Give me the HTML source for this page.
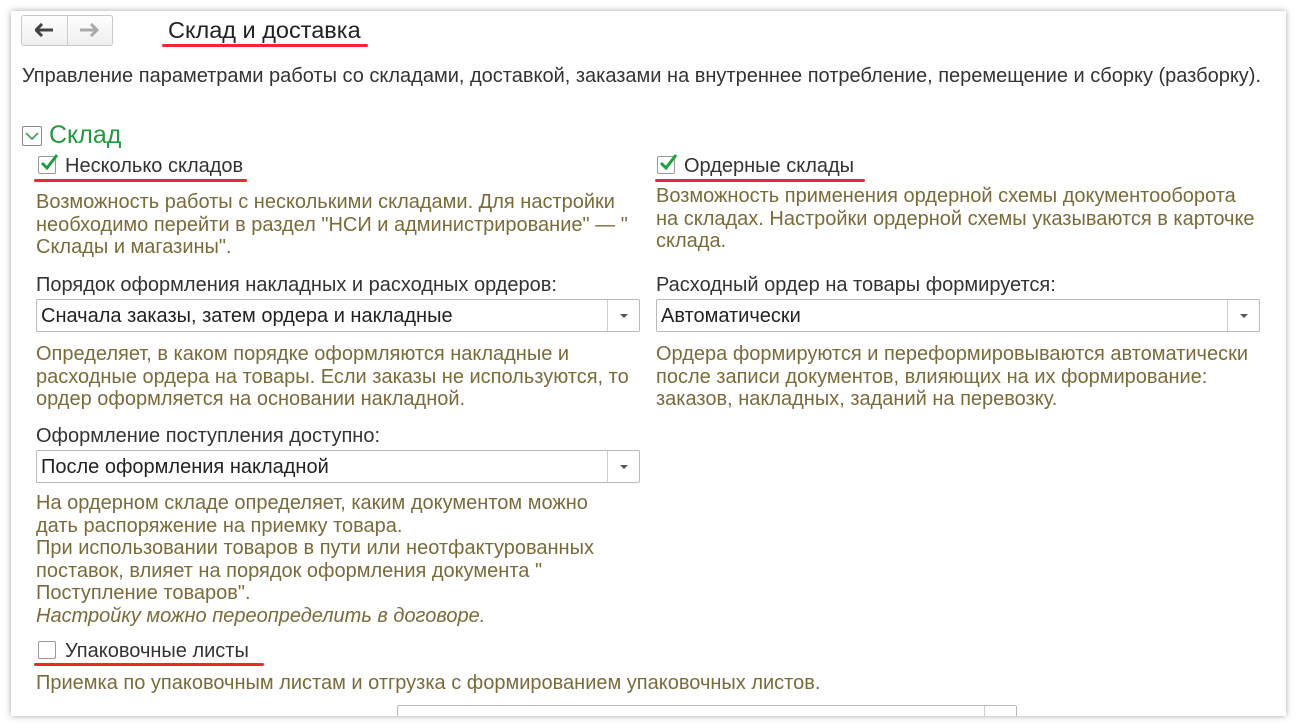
<!DOCTYPE html>
<html><head><meta charset="utf-8"><style>
body{margin:0;width:1297px;height:727px;background:#fff;font-family:"Liberation Sans",Arial,sans-serif;position:relative;overflow:hidden}
.panel{position:absolute;left:11px;top:11px;width:1275px;height:705px;background:#fff;box-shadow:0 0 6px rgba(0,0,0,.35);overflow:hidden}
.a{position:absolute;white-space:nowrap}
.t{font-size:20px;color:#333}
.d{font-size:20px;color:#7a6b3a;line-height:22.6px;white-space:nowrap}
.red{position:absolute;height:3px;background:#f0282d;border-radius:2px}
.cb{position:absolute;width:16px;height:16px;border:1px solid #999;border-radius:2px;background:#fff}
.sel{position:absolute;height:31px;border:1px solid #b9b9b9;border-radius:2px;background:#fff}
.sel span{position:absolute;left:4px;top:5px;font-size:20px;color:#222}
.sel i{position:absolute;right:0;top:0;width:31px;height:31px;border-left:1px solid #ccc}
.sel i:after{content:"";position:absolute;left:12px;top:14px;border:4px solid transparent;border-top:4px solid #555}
</style></head><body>
<div class="panel">
<div class="a" style="left:10px;top:4px;width:90px;height:29px;border:1px solid #c8c8c8;border-radius:3px;background:linear-gradient(#fff,#eee)"></div>
<div class="a" style="left:56px;top:5px;width:1px;height:29px;background:#d0d0d0"></div>
<svg class="a" style="left:24px;top:12px" width="20" height="14"><path d="M1 7H18M7 1L1 7L7 13" stroke="#444" stroke-width="3" fill="none"/></svg>
<svg class="a" style="left:68px;top:12px" width="20" height="14"><path d="M1 7H18M12 1L18 7L12 13" stroke="#aaa" stroke-width="3" fill="none"/></svg>
<div class="a" style="left:157px;top:6px;font-size:23.5px;color:#222">Склад и доставка</div>
<div class="red" style="left:151px;top:33px;width:206px"></div>
<div class="a t" style="left:11px;top:54px">Управление параметрами работы со складами, доставкой, заказами на внутреннее потребление, перемещение и сборку (разборку).</div>
<div class="cb" style="left:11px;top:115px;width:18px;height:18px;border-color:#888"></div>
<svg class="a" style="left:14px;top:120px" width="14" height="10"><path d="M1 2L7 8L13 2" stroke="#2a8f4a" stroke-width="1.5" fill="none"/></svg>
<div class="a" style="left:38px;top:110px;font-size:25px;color:#1f9a3e">Склад</div>

<div class="cb" style="left:27px;top:145px"></div>
<svg class="a" style="left:29px;top:141px" width="20" height="20"><path d="M2 11L7 16L17 3" stroke="#1ea03c" stroke-width="3" fill="none"/></svg>
<div class="a t" style="left:54px;top:144px">Несколько складов</div>
<div class="red" style="left:23px;top:168px;width:213px"></div>
<div class="a d" style="left:25px;top:180px">Возможность работы с несколькими складами. Для настройки<br>необходимо перейти в раздел "НСИ и администрирование" — "<br>Склады и магазины".</div>
<div class="a t" style="left:25px;top:263px">Порядок оформления накладных и расходных ордеров:</div>
<div class="sel" style="left:25px;top:288px;width:602px"><span>Сначала заказы, затем ордера и накладные</span><i></i></div>
<div class="a d" style="left:25px;top:332px">Определяет, в каком порядке оформляются накладные и<br>расходные ордера на товары. Если заказы не используются, то<br>ордер оформляется на основании накладной.</div>
<div class="a t" style="left:25px;top:414px">Оформление поступления доступно:</div>
<div class="sel" style="left:25px;top:439px;width:602px"><span>После оформления накладной</span><i></i></div>
<div class="a d" style="left:25px;top:481px">На ордерном складе определяет, каким документом можно<br>дать распоряжение на приемку товара.<br>При использовании товаров в пути или неотфактурованных<br>поставок, влияет на порядок оформления документа "<br>Поступление товаров".<br><i>Настройку можно переопределить в договоре.</i></div>
<div class="cb" style="left:27px;top:630px"></div>
<div class="a t" style="left:54px;top:629px">Упаковочные листы</div>
<div class="red" style="left:23px;top:652px;width:230px"></div>
<div class="a d" style="left:25px;top:661px">Приемка по упаковочным листам и отгрузка с формированием упаковочных листов.</div>
<div class="sel" style="left:386px;top:694px;width:618px"><i></i></div>

<div class="cb" style="left:646px;top:145px"></div>
<svg class="a" style="left:648px;top:141px" width="20" height="20"><path d="M2 11L7 16L17 3" stroke="#1ea03c" stroke-width="3" fill="none"/></svg>
<div class="a t" style="left:673px;top:144px">Ордерные склады</div>
<div class="red" style="left:644px;top:168px;width:210px"></div>
<div class="a d" style="left:645px;top:174px">Возможность применения ордерной схемы документооборота<br>на складах. Настройки ордерной схемы указываются в карточке<br>склада.</div>
<div class="a t" style="left:645px;top:263px">Расходный ордер на товары формируется:</div>
<div class="sel" style="left:645px;top:288px;width:602px"><span>Автоматически</span><i></i></div>
<div class="a d" style="left:645px;top:332px">Ордера формируются и переформировываются автоматически<br>после записи документов, влияющих на их формирование:<br>заказов, накладных, заданий на перевозку.</div>
</div>
</body></html>
